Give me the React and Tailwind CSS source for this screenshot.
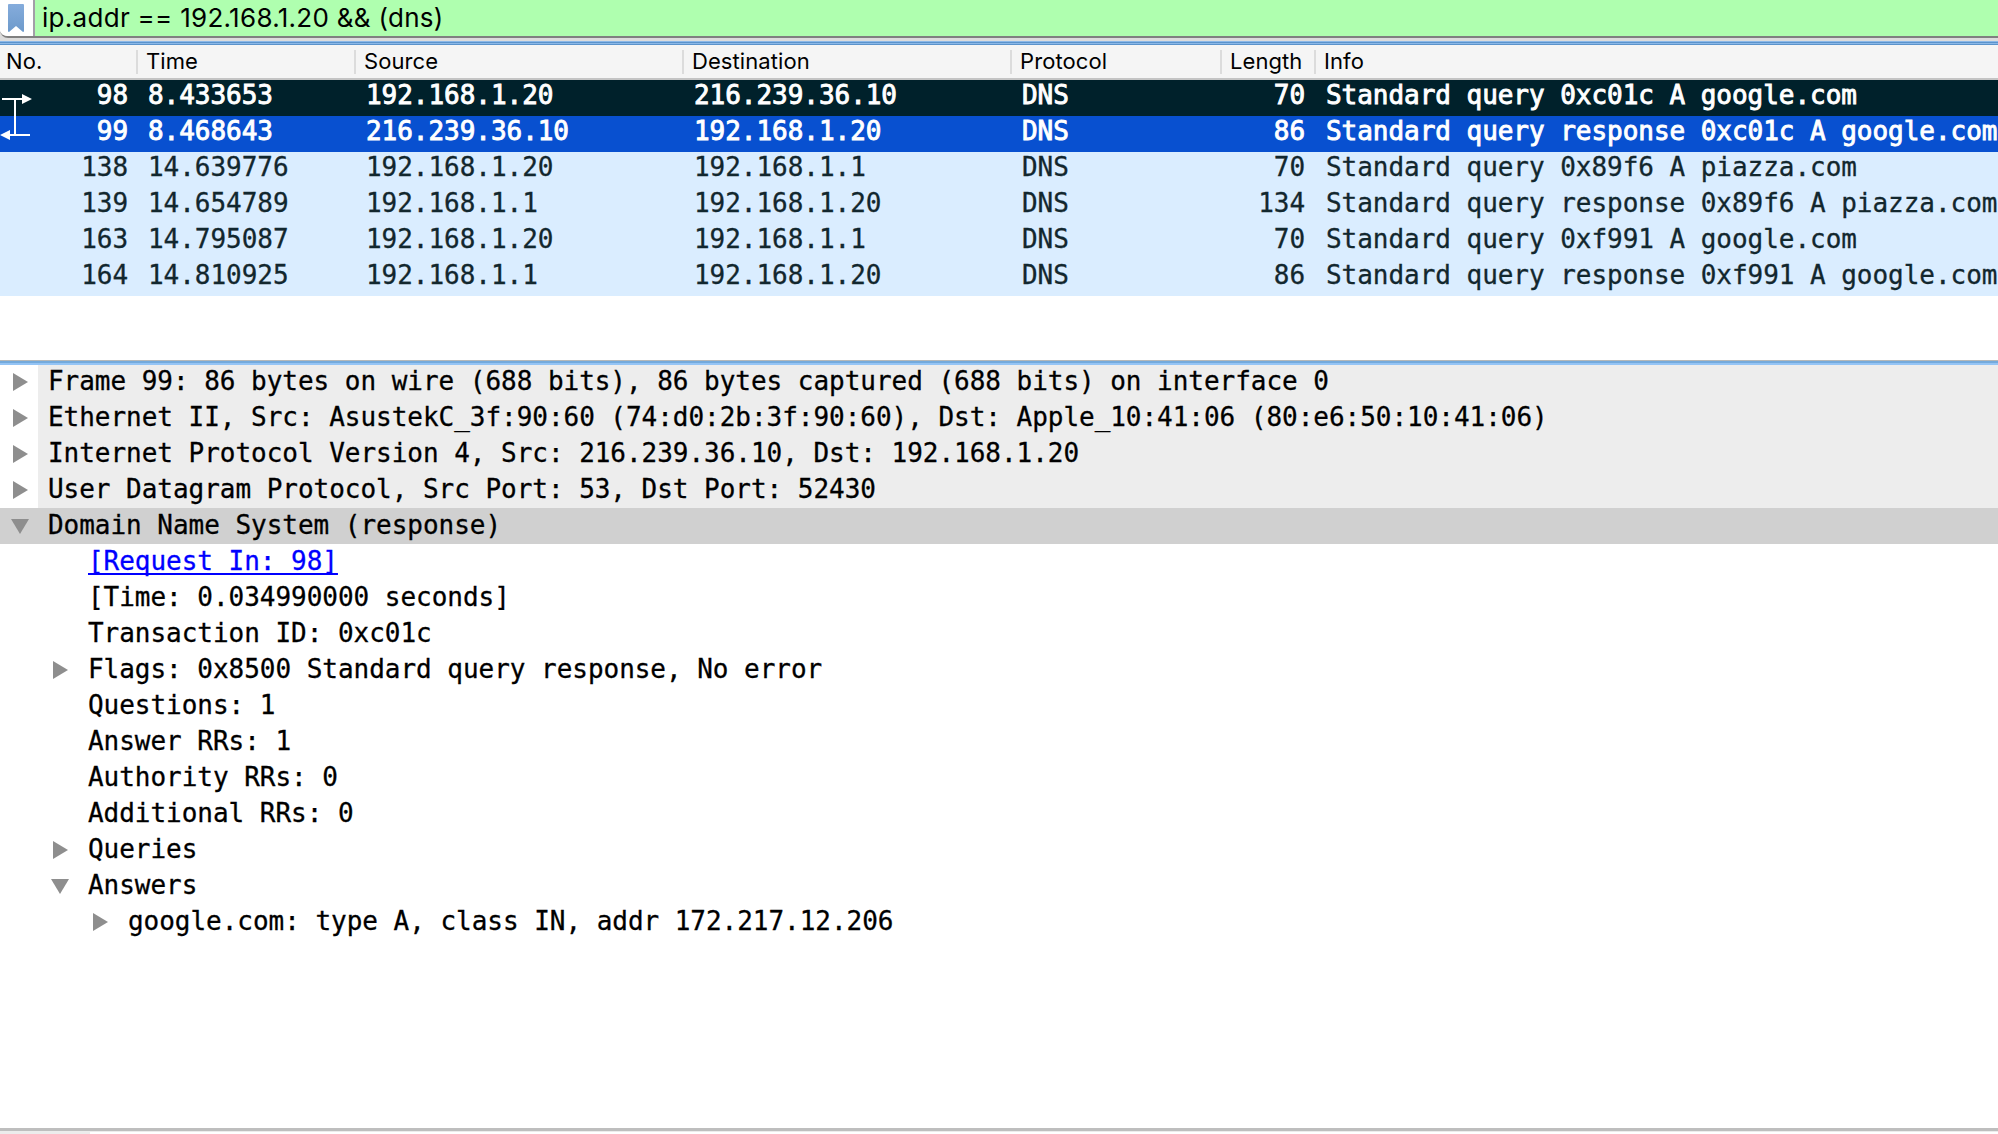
const packets = [
  { no: '98', time: '8.433653', src: '192.168.1.20', dst: '216.239.36.10', len: '70', info: 'Standard query 0xc01c A google.com', row: 'bg-[#00212b] text-white [-webkit-text-stroke:0.9px_white]' },
  { no: '99', time: '8.468643', src: '216.239.36.10', dst: '192.168.1.20', len: '86', info: 'Standard query response 0xc01c A google.com', row: 'bg-[#0850d0] text-white [-webkit-text-stroke:0.9px_white]' },
  { no: '138', time: '14.639776', src: '192.168.1.20', dst: '192.168.1.1', len: '70', info: 'Standard query 0x89f6 A piazza.com', row: 'bg-[#daedff] text-[#12272e] [-webkit-text-stroke:0.3px_#12272e]' },
  { no: '139', time: '14.654789', src: '192.168.1.1', dst: '192.168.1.20', len: '134', info: 'Standard query response 0x89f6 A piazza.com', row: 'bg-[#daedff] text-[#12272e] [-webkit-text-stroke:0.3px_#12272e]' },
  { no: '163', time: '14.795087', src: '192.168.1.20', dst: '192.168.1.1', len: '70', info: 'Standard query 0xf991 A google.com', row: 'bg-[#daedff] text-[#12272e] [-webkit-text-stroke:0.3px_#12272e]' },
  { no: '164', time: '14.810925', src: '192.168.1.1', dst: '192.168.1.20', len: '86', info: 'Standard query response 0xf991 A google.com', row: 'bg-[#daedff] text-[#12272e] [-webkit-text-stroke:0.3px_#12272e]' },
];

const columns = ['No.', 'Time', 'Source', 'Destination', 'Protocol', 'Length', 'Info'];

const details = [
  { text: 'Frame 99: 86 bytes on wire (688 bits), 86 bytes captured (688 bits) on interface 0', level: 0, state: 'closed', kind: 'header' },
  { text: 'Ethernet II, Src: AsustekC_3f:90:60 (74:d0:2b:3f:90:60), Dst: Apple_10:41:06 (80:e6:50:10:41:06)', level: 0, state: 'closed', kind: 'header' },
  { text: 'Internet Protocol Version 4, Src: 216.239.36.10, Dst: 192.168.1.20', level: 0, state: 'closed', kind: 'header' },
  { text: 'User Datagram Protocol, Src Port: 53, Dst Port: 52430', level: 0, state: 'closed', kind: 'header' },
  { text: 'Domain Name System (response)', level: 0, state: 'open', kind: 'selected' },
  { text: '[Request In: 98]', level: 1, kind: 'link' },
  { text: '[Time: 0.034990000 seconds]', level: 1 },
  { text: 'Transaction ID: 0xc01c', level: 1 },
  { text: 'Flags: 0x8500 Standard query response, No error', level: 1, state: 'closed' },
  { text: 'Questions: 1', level: 1 },
  { text: 'Answer RRs: 1', level: 1 },
  { text: 'Authority RRs: 0', level: 1 },
  { text: 'Additional RRs: 0', level: 1 },
  { text: 'Queries', level: 1, state: 'closed' },
  { text: 'Answers', level: 1, state: 'open' },
  { text: 'google.com: type A, class IN, addr 172.217.12.206', level: 2, state: 'closed' },
];

const gutters = ['w-[38px]', 'w-[78px]', 'w-[118px]'];
const grid = 'grid grid-cols-[136px_218px_328px_328px_210px_94px_1fr]';

function Disclosure({ state }) {
  return (
    <svg width="38" height="36" viewBox="0 0 38 36" className="shrink-0" fill="#8e8e8e">
      {state === 'closed' && <path d="M13 9v18l15-9z" />}
      {state === 'open' && <path d="M11 11h18l-9 15z" />}
    </svg>
  );
}

function DetailRow({ text, level, state, kind }) {
  return (
    <div className={kind === 'selected' ? 'flex h-9 bg-[#d0d0d0]' : 'flex h-9'}>
      <div className={'flex shrink-0 justify-end ' + gutters[level]}>
        <Disclosure state={state} />
      </div>
      <div className={kind === 'header' ? 'flex-1 bg-[#ededed] pl-[10px]' : 'flex-1 pl-[10px]'}>
        <span
          className={
            kind === 'link'
              ? 'text-[#0000ff] underline decoration-2 underline-offset-[3px] [text-decoration-skip-ink:none]'
              : ''
          }
        >
          {text}
        </span>
      </div>
    </div>
  );
}

export default function App() {
  return (
    <div className="flex h-[1134px] w-[1998px] flex-col overflow-hidden bg-white font-['Inter',sans-serif] text-black">
      {/* Display filter */}
      <div className="h-[41px] shrink-0 bg-[#dcdcdc]">
        <div className="flex h-[38px] overflow-hidden rounded-bl-[8px] border-b-2 border-[#808080] bg-white">
          <div className="w-[35px] shrink-0 border-r-2 border-[#a39fa8] bg-white">
            <svg width="33" height="36" viewBox="0 0 33 36">
              <defs>
                <linearGradient id="ribbon" x1="0" y1="0" x2="0" y2="1">
                  <stop offset="0" stopColor="#85acdc" />
                  <stop offset="1" stopColor="#6d9acb" />
                </linearGradient>
              </defs>
              <path d="M8 5q0-1 1-1h14q1 0 1 1v26q0 1-1 1l-7-6-7 6q-1 0-1-1z" fill="url(#ribbon)" />
            </svg>
          </div>
          <div className="flex-1 bg-[#afffaf] pl-[7px] text-[26px] leading-[36px] tracking-[0.29px] whitespace-pre">
            ip.addr == 192.168.1.20 &amp;&amp; (dns)
          </div>
        </div>
      </div>
      <div className="h-[2px] shrink-0 border-b border-[#5b93cb] bg-[#8bb8e8]" />
      <div className="h-[2px] shrink-0 border-b border-[#5b93cb] bg-[#8bb8e8]" />

      {/* Packet list */}
      <div className={'h-[35px] shrink-0 border-b-2 border-[#c4c4c4] bg-[#f5f5f5] text-[22px] leading-[33px] tracking-[0.08px] ' + grid}>
        {columns.map((name, i) => (
          <div key={name} className="flex">
            {i > 0 && <div className="mt-[5px] h-6 w-[2px] shrink-0 bg-[#dcdcdc]" />}
            <div className={i === 0 ? 'pl-[6px]' : 'pl-[8px]'}>{name}</div>
          </div>
        ))}
      </div>
      <div className="shrink-0 font-['DejaVu_Sans_Mono',monospace] text-[26px] leading-[30px] tracking-[-0.04px] whitespace-pre">
        {packets.map((p, i) => (
          <div key={p.no} className={'relative h-9 ' + grid + ' ' + p.row}>
            <div className="pr-[8px] text-right">{p.no}</div>
            <div className="pl-[12px]">{p.time}</div>
            <div className="pl-[12px]">{p.src}</div>
            <div className="pl-[12px]">{p.dst}</div>
            <div className="pl-[12px]">DNS</div>
            <div className="-mr-2 pr-[17px] text-right">{p.len}</div>
            <div className="pl-[12px]">{p.info}</div>
            {i === 1 && (
              <svg width="34" height="72" viewBox="0 0 34 72" className="absolute -top-9 left-0 text-white">
                <path d="M2 19H23M15 19V55M9 55H30" stroke="currentColor" strokeWidth="2" fill="none" />
                <path d="M22 14l10 5-10 5zM10 50L0 55l10 5z" fill="currentColor" />
              </svg>
            )}
          </div>
        ))}
      </div>
      <div className="h-[64px] shrink-0" />

      {/* Packet details */}
      <div className="z-10 -mb-px h-[5px] shrink-0 border-t border-[#b5b8b8] bg-[#94c4f5]">
        <div className="h-[2px] bg-[#74aadc]" />
      </div>
      <div className="h-[764px] shrink-0 font-['DejaVu_Sans_Mono',monospace] text-[26px] leading-[34px] tracking-[-0.032px] whitespace-pre [-webkit-text-stroke:0.3px_currentColor]">
        {details.map((row) => (
          <DetailRow key={row.text} {...row} />
        ))}
      </div>
      <div className="h-[3px] shrink-0 bg-[#bebebe]" />
      <div className="h-px shrink-0 bg-[#ececec]" />
      <div className="h-[2px] w-[90px] shrink-0 bg-[#ececec]" />
    </div>
  );
}
